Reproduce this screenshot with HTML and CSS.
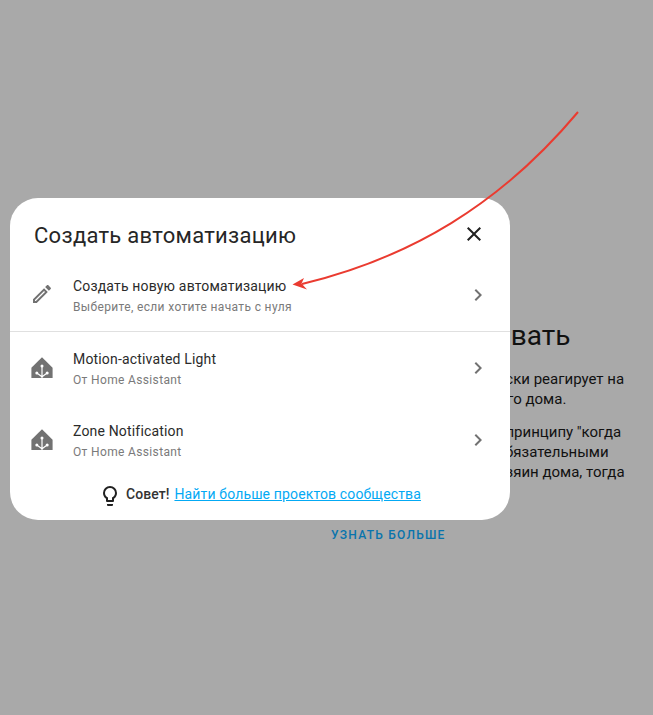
FILE: index.html
```html
<!DOCTYPE html>
<html lang="ru">
<head>
    <meta charset="UTF-8">
    <meta name="viewport" content="width=device-width, initial-scale=1.0">
    <title>Создать автоматизацию</title>
    <link rel="stylesheet" href="styles.css">
</head>
<body>
    <main class="page">
        <h2 class="page-title">Как автоматизировать</h2>
        <p class="page-text">Эта система автоматически реагирует на<br>события и явления вашего дома.</p>
        <p class="page-text">Автоматизация идёт, по принципу "когда<br>что-то произошло", с необязательными<br>условиями типа "если хозяин дома, тогда</p>
        <a class="page-link" href="#">Узнать больше</a>
    </main>

    <div class="dialog">
        <header class="dialog-header">
            <h1 class="dialog-title">Создать автоматизацию</h1>
            <svg class="icon close-icon" viewBox="0 0 24 24"><path d="M19,6.41L17.59,5L12,10.59L6.41,5L5,6.41L10.59,12L5,17.59L6.41,19L12,13.41L17.59,19L19,17.59L13.41,12L19,6.41Z"/></svg>
        </header>

        <a class="row row-divided" href="#">
            <svg class="icon row-icon" viewBox="0 0 24 24"><path d="M14.06,9L15,9.94L5.92,19H5V18.08L14.06,9M17.66,3C17.41,3 17.15,3.1 16.96,3.29L15.13,5.12L18.88,8.87L20.71,7.04C21.1,6.65 21.1,6 20.71,5.63L18.37,3.29C18.17,3.09 17.92,3 17.66,3M14.06,6.19L3,17.25V21H6.75L17.81,9.94L14.06,6.19Z"/></svg>
            <div class="row-text">
                <div class="row-name">Создать новую автоматизацию</div>
                <div class="row-sub">Выберите, если хотите начать с нуля</div>
            </div>
            <svg class="icon chevron" viewBox="0 0 24 24"><path d="M8.59,16.58L13.17,12L8.59,7.41L10,6L16,12L10,18L8.59,16.58Z"/></svg>
        </a>

        <a class="row" href="#">
            <svg class="icon row-icon" viewBox="0 0 24 24">
                <path d="M12 1.2L22.6 11.8V22H1.4V11.8Z"/>
                <g class="tree">
                    <path d="M12 10V22M6.8 17L12 20.8M17.2 17L12 20.8"/>
                    <circle cx="12" cy="10" r="1.5"/>
                    <circle cx="6.8" cy="17" r="1.5"/>
                    <circle cx="17.2" cy="17" r="1.5"/>
                </g>
            </svg>
            <div class="row-text row-text-low">
                <div class="row-name">Motion-activated Light</div>
                <div class="row-sub">От Home Assistant</div>
            </div>
            <svg class="icon chevron" viewBox="0 0 24 24"><path d="M8.59,16.58L13.17,12L8.59,7.41L10,6L16,12L10,18L8.59,16.58Z"/></svg>
        </a>

        <a class="row" href="#">
            <svg class="icon row-icon" viewBox="0 0 24 24">
                <path d="M12 1.2L22.6 11.8V22H1.4V11.8Z"/>
                <g class="tree">
                    <path d="M12 10V22M6.8 17L12 20.8M17.2 17L12 20.8"/>
                    <circle cx="12" cy="10" r="1.5"/>
                    <circle cx="6.8" cy="17" r="1.5"/>
                    <circle cx="17.2" cy="17" r="1.5"/>
                </g>
            </svg>
            <div class="row-text row-text-low">
                <div class="row-name">Zone Notification</div>
                <div class="row-sub">От Home Assistant</div>
            </div>
            <svg class="icon chevron" viewBox="0 0 24 24"><path d="M8.59,16.58L13.17,12L8.59,7.41L10,6L16,12L10,18L8.59,16.58Z"/></svg>
        </a>

        <footer class="tip">
            <svg class="icon tip-icon" viewBox="0 0 24 24"><path d="M12,2A7,7 0 0,1 19,9C19,11.38 17.81,13.47 16,14.74V17A1,1 0 0,1 15,18H9A1,1 0 0,1 8,17V14.74C6.19,13.47 5,11.38 5,9A7,7 0 0,1 12,2M9,21V20H15V21A1,1 0 0,1 14,22H10A1,1 0 0,1 9,21M12,4A5,5 0 0,0 7,9C7,11.05 8.23,12.81 10,13.58V16H14V13.58C15.77,12.81 17,11.05 17,9A5,5 0 0,0 12,4Z"/></svg>
            <span class="tip-label">Совет!</span>
            <a class="tip-link" href="#">Найти больше проектов сообщества</a>
        </footer>
    </div>

    <svg class="arrow" viewBox="0 0 653 715" width="653" height="715">
        <path class="arrow-line" d="M578 112C500 205 410 258 302 284"/>
        <path class="arrow-head" d="M292.5 284.5L304 278L301.5 283.5L307 289.5Z"/>
    </svg>
</body>
</html>
```

FILE: styles.css
```css
html, body {
    height: 100%;
}
body {
    margin: 0;
    background-color: #a9a9a9;
    font-family: 'Roboto', sans-serif;
    color: #111;
    overflow: hidden;
}
.page {
    width: 300px;
    padding: 320px 0 0 331px;
}
.page-title {
    margin: 0 0 0 -63px;
    font-size: 28px;
    font-weight: 400;
    line-height: 32px;
    white-space: nowrap;
}
.page-text {
    margin: 17px 0 0;
    font-size: 15px;
    line-height: 20px;
    white-space: nowrap;
}
.page-text + .page-text {
    margin-top: 13px;
}
.page-link {
    display: block;
    margin-top: 46px;
    font-size: 12px;
    font-weight: 500;
    letter-spacing: 1.25px;
    text-transform: uppercase;
    text-decoration: none;
    color: #0874ad;
}
.dialog {
    position: absolute;
    top: 198px;
    left: 10px;
    width: 500px;
    height: 322px;
    background-color: #fff;
    border-radius: 28px;
    display: flex;
    flex-direction: column;
    overflow: hidden;
}
.dialog-header {
    height: 62px;
    padding: 0 24px;
    display: flex;
    align-items: center;
    justify-content: space-between;
    flex-shrink: 0;
}
.dialog-title {
    margin: 12px 0 0;
    font-size: 22px;
    font-weight: 400;
    letter-spacing: 0.28px;
    color: #262626;
}
.icon {
    width: 24px;
    height: 24px;
    flex-shrink: 0;
    fill: currentColor;
}
.close-icon {
    margin: 9px 0 0;
    color: #212121;
}
.row {
    height: 72px;
    padding: 0 20px;
    display: flex;
    align-items: center;
    text-decoration: none;
    flex-shrink: 0;
    box-sizing: border-box;
}
.row-divided {
    border-bottom: 1px solid #e0e0e0;
}
.row-divided .row-icon {
    margin-top: -3px;
}
.row-divided .chevron {
    margin-top: -1px;
}
.row-icon {
    color: #727272;
    margin-right: 19px;
}
.tree path {
    fill: none;
    stroke: #fff;
    stroke-width: 1.2;
}
.tree circle {
    fill: #fff;
}
.row-text {
    flex: 1;
    padding-top: 1px;
}
.row-text-low {
    padding-top: 2px;
}
.row-name {
    font-size: 14px;
    line-height: 20px;
    color: #2b2b2b;
    letter-spacing: 0.17px;
}
.row-sub {
    margin-top: 1px;
    font-size: 12px;
    line-height: 20px;
    color: #7a7a7a;
    letter-spacing: 0.35px;
}
.chevron {
    color: #727272;
}
.tip {
    flex: 1;
    display: flex;
    align-items: center;
    justify-content: center;
    padding: 0 0 8px 2px;
    font-size: 14px;
    color: #212121;
}
.tip-icon {
    margin: 4px 4px 0 -3px;
}
.tip-label {
    margin-right: 5px;
    font-weight: 500;
    color: #333;
    letter-spacing: 0.05px;
}
.tip-link {
    color: #03a9f4;
    letter-spacing: 0.14px;
}
.arrow {
    position: absolute;
    top: 0;
    left: 0;
    pointer-events: none;
}
.arrow-line {
    fill: none;
    stroke: #ea3b30;
    stroke-width: 2;
}
.arrow-head {
    fill: #ea3b30;
}
```
